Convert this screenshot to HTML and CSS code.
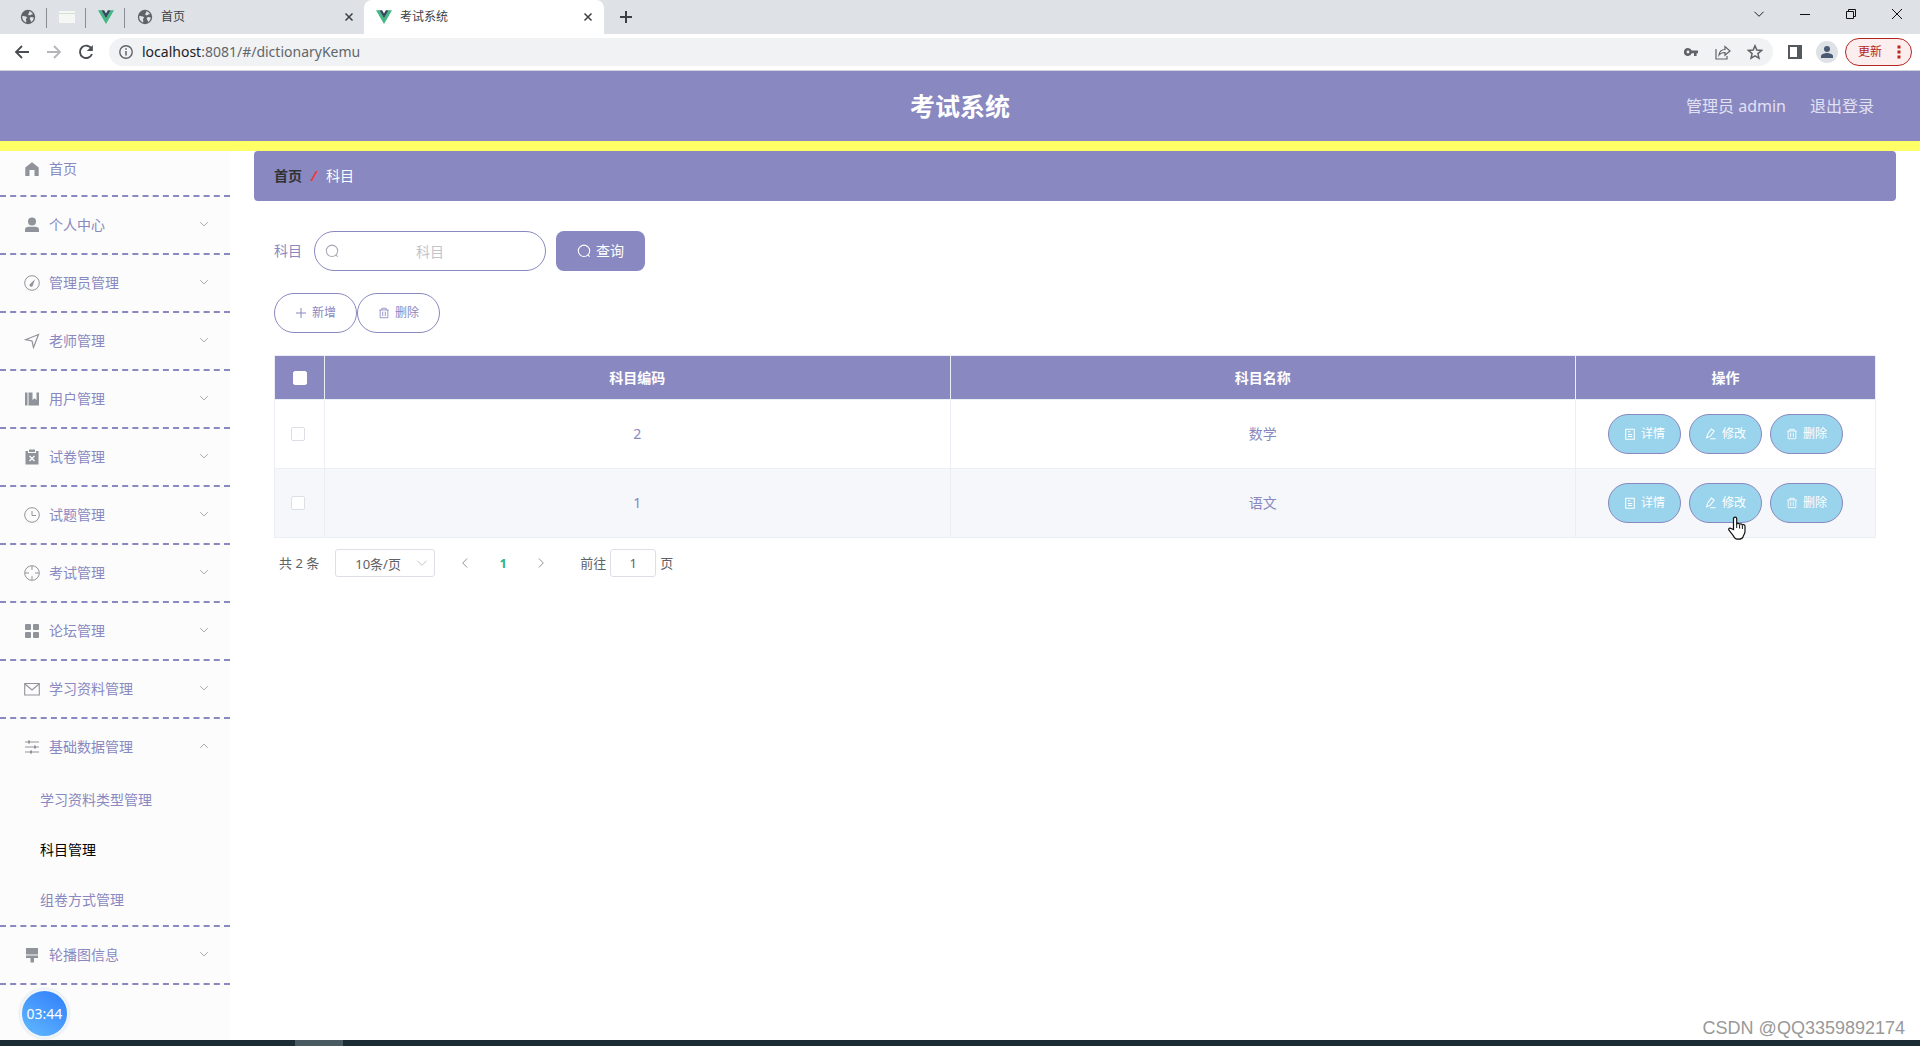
FILE: index.html
```html
<!DOCTYPE html>
<html lang="zh-CN">
<head>
<meta charset="utf-8">
<title>考试系统</title>
<link rel="stylesheet" href="styles.css">
</head>
<body>
<svg class="sprite" aria-hidden="true">
  <symbol id="globe" viewBox="0 0 16 16"><circle cx="8" cy="8" r="7.2" fill="#5f6368"/><path fill="#dee1e6" d="M2.2 7.2c1.600-.4 2.400.3 3.600.3 1.200.2 1.500 1.100.7 1.900-.9.800-.400 1.600-.200 2.500.100.700-.100 1.300-.3 1.600C3.700 12.600 2 10.300 2.200 7.200zM9 2.200c1.700.3 3.300 1.400 4.100 3-.8.100-1.400-.1-2 .5-.7.700-1.800.700-2.500.200-.8-.6-.3-1.400.3-1.900.500-.4.300-1.100.1-1.800zM10.600 8.200c1-.500 2-.200 3.200.2-.1 1.900-1.100 3.600-2.700 4.600-.2-.9-.2-1.400-.8-2-.8-.8-.7-2.200.3-2.800z"/></symbol>
  <symbol id="vue" viewBox="0 0 16 16"><path fill="#41b883" d="M0 1.200h3.300L8 9.200l4.700-8H16L8 15z"/><path fill="#35495e" d="M3.300 1.200h2.800L8 4.600l1.900-3.400h2.800L8 9.300z"/></symbol>
  <symbol id="cross" viewBox="0 0 10 10"><path d="M1.500 1.500l7 7m0-7l-7 7" fill="none" stroke="currentColor" stroke-width="1.500"/></symbol>
  <symbol id="down" viewBox="0 0 12 12"><path d="M1.500 3.800L6 8.300l4.500-4.500" fill="none" stroke="currentColor" stroke-width="1"/></symbol>
  <symbol id="search" viewBox="0 0 16 16"><circle cx="8" cy="7.800" r="6.500" fill="none" stroke="currentColor" stroke-width="1.200"/><path d="M12.300 12.300l2.200 2.200" stroke="currentColor" stroke-width="1.200"/></symbol>
  <symbol id="trash" viewBox="0 0 14 14"><path d="M1.500 3.500h11M4.500 3.500v-2h5v2M2.500 3.500v9h9v-9M5.500 5.500v5M8.500 5.500v5" fill="none" stroke="currentColor"/></symbol>
  <symbol id="detail" viewBox="0 0 14 14"><path d="M2 1.500h10v11.500H2zM4.500 4.500h3M4.500 7.500h5M4.500 10h5" fill="none" stroke="currentColor" stroke-width="1.200"/></symbol>
  <symbol id="edit" viewBox="0 0 14 14"><path d="M1.800 11.500l1.400-4.500L7.500 1.200l3.200 2.300-4.500 6zM6 12.600h6.500" fill="none" stroke="currentColor" stroke-width="1.200"/></symbol>
</svg>

<div class="tabstrip">
  <div class="pinned"><svg class="i16"><use href="#globe"/></svg></div>
  <div class="pinned"><svg class="i16" viewBox="0 0 16 16"><path fill="#f5f7f5" d="M0 2h16v12H0z"/><path stroke="#d3e0d5" d="M0 4.500h16"/></svg></div>
  <div class="pinned"><svg class="i16"><use href="#vue"/></svg></div>
  <div class="tab"><svg class="i16"><use href="#globe"/></svg><span>首页</span><button class="plain" aria-label="关闭标签页"><svg class="i10"><use href="#cross"/></svg></button></div>
  <div class="tab active"><svg class="i16"><use href="#vue"/></svg><span>考试系统</span><button class="plain" aria-label="关闭标签页"><svg class="i10"><use href="#cross"/></svg></button></div>
  <button class="plain newtab" aria-label="新标签页"><svg class="i14" viewBox="0 0 14 14"><path d="M7 1v12M1 7h12" stroke="#3c4043" stroke-width="2"/></svg></button>
  <div class="window-controls">
    <button class="plain" aria-label="搜索标签页"><svg class="i12"><use href="#down"/></svg></button>
    <button class="plain" aria-label="最小化"><svg class="i12" viewBox="0 0 12 12"><path d="M1 6.500h10" stroke="#111"/></svg></button>
    <button class="plain" aria-label="还原"><svg class="i12" viewBox="0 0 12 12"><path d="M1.500 3.500h7v7h-7zM3.500 3.500v-2h7v7h-2" fill="none" stroke="#111"/></svg></button>
    <button class="plain" aria-label="关闭"><svg class="i12" viewBox="0 0 12 12"><path d="M1 1l10 10M11 1L1 11" stroke="#111"/></svg></button>
  </div>
</div>

<div class="toolbar">
  <div class="nav">
    <button class="plain" aria-label="后退"><svg class="i16" viewBox="0 0 16 16"><path d="M15 8H2M8 2L2 8l6 6" fill="none" stroke="#4a4d51" stroke-width="1.800"/></svg></button>
    <button class="plain" aria-label="前进"><svg class="i16" viewBox="0 0 16 16"><path d="M1 8h13M8 2l6 6-6 6" fill="none" stroke="#b4b6b9" stroke-width="1.800"/></svg></button>
    <button class="plain" aria-label="重新加载"><svg class="i16" viewBox="0 0 16 16"><path d="M13.600 4.800A6.200 6.200 0 1 0 14 10" fill="none" stroke="#4a4d51" stroke-width="1.900"/><path d="M14.800 1v6H8.800z" fill="#4a4d51"/></svg></button>
  </div>
  <div class="omnibox">
    <svg class="i14" viewBox="0 0 14 14"><circle cx="7" cy="7" r="6.200" fill="none" stroke="#5f6368" stroke-width="1.400"/><path d="M7 6v4.500M7 3.300v1.500" stroke="#5f6368" stroke-width="1.500"/></svg>
    <span class="url"><b>localhost</b>:8081/#/dictionaryKemu</span>
    <svg class="i16" viewBox="0 0 16 16"><path fill="#5f6368" fill-rule="evenodd" d="M5 4a4 4 0 1 0 3.700 5.300H11V12h2.600V9.300H15V6.600H8.700A4 4 0 0 0 5 4zm0 2.600A1.400 1.400 0 1 1 5 9.400a1.400 1.400 0 0 1 0-2.800z"/></svg>
    <svg class="i16" viewBox="0 0 16 16"><path d="M1 5v10h11v-3M4 11c.5-4 3-5.500 6-5.500V2.500L15 7l-5 4.300V8.500c-2.500 0-4.500.5-6 2.500z" fill="none" stroke="#5f6368" stroke-width="1.200"/></svg>
    <svg class="i16" viewBox="0 0 16 16"><path d="M8 1.800l1.800 4.300 4.700.4-3.600 3.100 1.100 4.600L8 11.800l-4 2.400 1.100-4.600L1.500 6.500l4.700-.4z" fill="none" stroke="#5f6368" stroke-width="1.500"/></svg>
  </div>
  <button class="plain" aria-label="侧边栏"><svg class="i16" viewBox="0 0 16 16"><path d="M2 2h12v12H2z" fill="#fff" stroke="#55585c" stroke-width="2"/><path d="M10 2h4v12h-4z" fill="#55585c"/></svg></button>
  <button class="plain avatar" aria-label="用户"><svg class="i14" viewBox="0 0 14 14"><circle cx="7" cy="4" r="3" fill="#4a5a75"/><path d="M1 13v-2c0-2 4-3 6-3s6 1 6 3v2z" fill="#4a5a75"/></svg></button>
  <button class="update"><span>更新</span><svg viewBox="0 0 4 14" width="4" height="14"><path d="M.5.500h3v3h-3zM.5 5.500h3v3h-3zM.5 10.500h3v3h-3z" fill="#b3261e"/></svg></button>
</div>

<header class="app-header">
  <h1>考试系统</h1>
  <div class="account"><span>管理员 admin</span><a href="#logout">退出登录</a></div>
</header>

<div class="body">
  <nav class="sidebar">
    <a class="item home" href="#home"><svg class="i16" viewBox="0 0 16 16"><path fill="#909399" d="M8 1.200L1.300 6.500V15H5.500V9h5v6h4.200V6.500z"/></svg><span>首页</span></a>
    <a class="item" href="#me"><svg class="i16" viewBox="0 0 16 16"><circle cx="8" cy="4.600" r="4" fill="#909399"/><path fill="#909399" d="M1 15v-2c0-2 1.500-3.200 3.500-3.200h7c2 0 3.500 1.200 3.500 3.200v2z"/></svg><span>个人中心</span><svg class="arrow"><use href="#down"/></svg></a>
    <a class="item" href="#admins"><svg class="i16" viewBox="0 0 16 16"><circle cx="8" cy="8" r="7.300" fill="none" stroke="#909399"/><path fill="#909399" d="M11 4.200L6.300 8.700a1.700 1.700 0 1 0 2.600 1.600z"/></svg><span>管理员管理</span><svg class="arrow"><use href="#down"/></svg></a>
    <a class="item" href="#teachers"><svg class="i16" viewBox="0 0 16 16"><path d="M1.500 6.700L14.500 1.500 9.500 14.500 8 8z" fill="none" stroke="#909399" stroke-width="1.200"/></svg><span>老师管理</span><svg class="arrow"><use href="#down"/></svg></a>
    <a class="item" href="#users"><svg class="i16" viewBox="0 0 16 16"><path fill="#909399" d="M1 1.500h2.500v13H1zM4.500 1.500h4V9l2-1.800L12.500 9V1.500H15v13H4.500z"/></svg><span>用户管理</span><svg class="arrow"><use href="#down"/></svg></a>
    <a class="item" href="#papers"><svg class="i16" viewBox="0 0 16 16"><path fill="#909399" d="M1.500 2H4v2h8V2h2.500v13.500h-13zM5 .500h6V3H5z"/><path d="M5.500 7l5 5m0-5l-5 5" stroke="#fff" stroke-width="1.300"/></svg><span>试卷管理</span><svg class="arrow"><use href="#down"/></svg></a>
    <a class="item" href="#questions"><svg class="i16" viewBox="0 0 16 16"><path d="M8 4v4.500h4" fill="none" stroke="#909399"/><circle cx="8" cy="8" r="7.300" fill="none" stroke="#909399"/></svg><span>试题管理</span><svg class="arrow"><use href="#down"/></svg></a>
    <a class="item" href="#exams"><svg class="i16" viewBox="0 0 16 16"><circle cx="8" cy="8" r="7.300" fill="none" stroke="#909399"/><path d="M8 1v4M8 11v4M1 8h4M11 8h4" stroke="#909399"/></svg><span>考试管理</span><svg class="arrow"><use href="#down"/></svg></a>
    <a class="item" href="#forum"><svg class="i16" viewBox="0 0 16 16" fill="#909399"><rect x="1" y="1" width="6" height="6" rx="1"/><rect x="9" y="1" width="6" height="6" rx="1"/><rect x="1" y="9" width="6" height="6" rx="1"/><rect x="9" y="9" width="6" height="6" rx="1"/></svg><span>论坛管理</span><svg class="arrow"><use href="#down"/></svg></a>
    <a class="item" href="#materials"><svg class="i16" viewBox="0 0 16 16"><path d="M.700 2.500h14.600v11.500H.700zM1 3l7 6 7-6" fill="none" stroke="#909399" stroke-width="1.100"/></svg><span>学习资料管理</span><svg class="arrow"><use href="#down"/></svg></a>
    <div class="group">
      <a class="item" href="#base"><svg class="i16" viewBox="0 0 16 16"><path d="M1 3h14M1 8h14M1 13h14" stroke="#909399" stroke-width="1.200"/><path d="M4 1.500h2v3H4zM10 6.500h2v3h-2zM6 11.500h2v3H6z" fill="#909399"/></svg><span>基础数据管理</span><svg class="arrow open"><use href="#down"/></svg></a>
      <a class="sub" href="#types">学习资料类型管理</a>
      <a class="sub current" href="#subjects">科目管理</a>
      <a class="sub" href="#modes">组卷方式管理</a>
    </div>
    <a class="item" href="#banners"><svg class="i16" viewBox="0 0 16 16"><path fill="#909399" d="M2 1h12v6.500H2zM2 8.500h12V11H10v4.500H6.500V11H2z"/></svg><span>轮播图信息</span><svg class="arrow"><use href="#down"/></svg></a>
  </nav>

  <main>
    <div class="breadcrumb"><a href="#home">首页</a><i>/</i><span>科目</span></div>
    <div class="content">
      <form class="search">
        <label for="subject">科目</label>
        <div class="field"><svg class="i14"><use href="#search"/></svg><input id="subject" type="text" placeholder="科目"></div>
        <button type="button" class="query"><svg class="i14"><use href="#search"/></svg>查询</button>
      </form>
      <div class="actions">
        <button class="pill"><svg class="i12" viewBox="0 0 12 12"><path d="M6 1v10M1 6h10" stroke="currentColor"/></svg>新增</button>
        <button class="pill"><svg class="i12"><use href="#trash"/></svg>删除</button>
      </div>
      <table>
        <colgroup><col class="c-check"><col><col><col class="c-ops"></colgroup>
        <thead><tr><th><input type="checkbox" aria-label="全选"></th><th>科目编码</th><th>科目名称</th><th>操作</th></tr></thead>
        <tbody>
          <tr><td><input type="checkbox" aria-label="选择 2"></td><td>2</td><td>数学</td><td><div class="ops"><button><svg class="i12"><use href="#detail"/></svg>详情</button><button><svg class="i12"><use href="#edit"/></svg>修改</button><button><svg class="i12"><use href="#trash"/></svg>删除</button></div></td></tr>
          <tr class="hover"><td><input type="checkbox" aria-label="选择 1"></td><td>1</td><td>语文</td><td><div class="ops"><button><svg class="i12"><use href="#detail"/></svg>详情</button><button class="pointed"><svg class="i12"><use href="#edit"/></svg>修改<svg class="cursor" viewBox="0 0 20 25"><path d="M6.500 13.500V2.800c0-2.300 3.200-2.300 3.200 0V8.500c0-1.600 2.900-1.500 2.900.3 0-1.400 2.800-1.300 2.800.6 0-1.300 2.600-1.200 2.600.8v5.300c0 2.300-1.700 3.900-1.900 5.200-1 3.200-7.700 3.200-9.100.2C5.500 18 3.500 16.400 2 14.200c-1.100-1.800 1-2.700 2.200-1.600z" fill="#fff" stroke="#111" stroke-width="1.200"/><path d="M9.700 8v4M12.600 9v3.500M15.400 9.500V13" stroke="#111"/></svg></button><button><svg class="i12"><use href="#trash"/></svg>删除</button></div></td></tr>
        </tbody>
      </table>
      <div class="pagination">
        <span>共 2 条</span>
        <div class="size"><select aria-label="每页条数"><option>10条/页</option></select><svg class="i12"><use href="#down"/></svg></div>
        <button class="plain page" aria-label="上一页"><svg class="i12 prev"><use href="#down"/></svg></button>
        <button class="plain page on">1</button>
        <button class="plain page" aria-label="下一页"><svg class="i12 next"><use href="#down"/></svg></button>
        <label class="jump">前往<input type="text" value="1">页</label>
      </div>
    </div>
  </main>
</div>
<div class="taskbar"><span></span></div>
<div class="timer">03:44</div>
<div class="watermark">CSDN @QQ3359892174</div>
</body>
</html>
```
FILE: styles.css
```css
* { box-sizing: border-box; }
body {
  margin: 0;
  min-height: 100vh;
  display: flex;
  flex-direction: column;
  position: relative;
  background: #fff;
  color: #8988c0;
  font: 14px/20px "Noto Sans", "Noto Sans CJK SC", sans-serif;
}
a { color: inherit; text-decoration: none; }
button, input, select { font: inherit; color: inherit; margin: 0; }
svg { flex: none; display: block; }
.sprite { position: absolute; width: 0; height: 0; }
.i10 { width: 10px; height: 10px; }
.i12 { width: 12px; height: 12px; }
.i14 { width: 14px; height: 14px; }
.i16 { width: 16px; height: 16px; }
.plain { border: 0; padding: 0; background: none; display: flex; align-items: center; justify-content: center; }

/* Browser window */
.tabstrip { display: flex; height: 34px; padding-left: 8px; background: #dee1e6; color: #3c4043; font-size: 12px; }
.pinned { width: 39px; display: flex; align-items: center; justify-content: center; position: relative; }
.pinned::after { content: ""; position: absolute; right: 0; top: 8px; width: 1px; height: 20px; background: #8a8d91; }
.tab { width: 239px; display: flex; align-items: center; gap: 8px; padding: 0 10px 0 12px; }
.tab span { flex: 1; }
.tab.active { width: 240px; padding-right: 11px; background: #fff; border-radius: 8px 8px 0 0; }
.newtab { width: 43px; }
.window-controls { margin-left: auto; display: flex; padding-bottom: 6px; color: #222; }
.window-controls button { width: 46px; }
.toolbar { display: flex; align-items: center; height: 37px; padding: 0 8px 1px 14px; border-bottom: 1px solid #d0d2dc; }
.nav { display: flex; gap: 16px; width: 95px; }
.omnibox { flex: 1; display: flex; align-items: center; gap: 16px; height: 28px; padding: 0 10px; border-radius: 14px; background: #f0f2f4; }
.url { flex: 1; margin-left: -7px; font-size: 14px; color: #63666a; }
.url b { font-weight: 400; color: #202124; }
.omnibox + .plain { margin: 0 13px 0 14px; }
.avatar { width: 22px; height: 22px; border-radius: 50%; background: #dee1e6; }
.update { display: flex; align-items: center; justify-content: space-between; width: 67px; height: 28px; margin-left: 7px; padding: 0 10px 0 12px; border: 1px solid #b3261e; border-radius: 14px; background: #fceeee; color: #b3261e; font-size: 12px; }

/* Application header */
.app-header { display: grid; grid-template-columns: 1fr auto 1fr; align-items: center; height: 80px; padding: 0 46px; background: #8988c0; border-bottom: 10px solid #ffff66; color: #fff; }
.app-header h1 { grid-column: 2; margin: 0; font-size: 25px; line-height: 36px; }
.account { justify-self: end; display: flex; gap: 24px; font-size: 16px; color: #e1e1f3; }

/* Side menu */
.body { flex: 1; display: flex; }
.sidebar { width: 230px; flex: none; background: #fcfcfc; }
.item { display: flex; align-items: center; gap: 9px; height: 58px; padding: 0 21px 0 24px; border-bottom: 2px dashed #8988c0; }
.item.home { height: 46px; padding-bottom: 8px; }
.arrow { width: 10px; height: 10px; margin: 0 0 3px auto; color: #909399; }
.arrow.open { transform: rotate(180deg); }
.group { border-bottom: 2px dashed #8988c0; }
.group .item { height: 56px; border: 0; }
.sub { display: block; padding: 0 40px; line-height: 50px; }
.sub.current { color: #000; }

/* Main area */
main { flex: 1; padding: 0 24px; }
.breadcrumb { display: flex; gap: 9px; padding: 15px 20px; border-radius: 4px; background: #8988c0; color: #fff; }
.breadcrumb a { color: #303133; font-weight: 700; }
.breadcrumb i { color: #f03a3a; font-weight: 700; }
.content { padding: 30px 20px; }
.search { display: flex; align-items: center; }
.field { width: 232px; margin: 0 10px 0 12px; display: flex; align-items: center; border: 1px solid #8988c0; border-radius: 20px; padding: 0 10px; color: #a6a9b4; }
.field input { flex: 1; min-width: 0; height: 38px; border: 0; padding: 0 14px 0 0; background: none; outline: 0; text-align: center; }
.field input::placeholder { color: #c0c4cc; }
.query { display: flex; align-items: center; justify-content: center; gap: 5px; width: 89px; height: 40px; border: 0; border-radius: 8px; background: #8988c0; color: #fff; }
.actions { display: flex; margin: 22px 0; }
.pill { display: flex; align-items: center; justify-content: center; gap: 5px; width: 83px; height: 40px; border: 1px solid #8988c0; border-radius: 20px; background: #fff; font-size: 12px; }

table { width: 100%; table-layout: fixed; border-spacing: 0; border-left: 1px solid #ebeef5; border-top: 1px solid #ebeef5; }
.c-check { width: 50px; }
.c-ops { width: 300px; }
th, td { padding: 0; text-align: center; border-right: 1px solid #ebeef5; border-bottom: 1px solid #ebeef5; }
th { height: 44px; background: #8988c0; color: #fff; }
td { height: 69px; }
.hover td { background: #f5f7fa; }
input[type="checkbox"] { appearance: none; display: block; width: 14px; height: 14px; margin: 0 auto; border: 1px solid #dcdfe6; border-radius: 2px; background: #fff; }
th input[type="checkbox"] { border-color: #fff; }
td:first-child { padding-right: 3px; }
.ops { display: flex; justify-content: center; gap: 8px; }
.ops button { position: relative; display: flex; align-items: center; justify-content: center; gap: 5px; width: 73px; height: 40px; padding: 0; border: 1px solid #8988c0; border-radius: 20px; background: #9ad3ec; color: #fff; font-size: 12px; }
.cursor { position: absolute; left: 37px; top: 32px; width: 20px; height: 25px; }

.pagination { display: flex; align-items: center; margin: 11px 5px; font-size: 13px; line-height: 28px; color: #606266; }
.size { position: relative; width: 100px; margin: 0 11px 0 16px; }
.size select { appearance: none; display: block; width: 100%; height: 28px; padding: 0 19px; border: 1px solid #dcdfe6; border-radius: 3px; background: #fff; outline: 0; }
.size svg { position: absolute; right: 7px; top: 8px; color: #c0c4cc; }
.page { width: 30px; height: 28px; margin: 0 4px; color: #909399; }
.page.on { color: #2ab58d; font-weight: 700; }
.prev { transform: rotate(90deg); }
.next { transform: rotate(-90deg); }
.jump { display: flex; gap: 4px; margin-left: 20px; }
.jump input { width: 46px; height: 28px; padding: 0; border: 1px solid #dcdfe6; border-radius: 3px; text-align: center; }

.taskbar { height: 6px; padding: 0 4px 0 295px; background: #1b2c34; }
.taskbar span { display: block; width: 48px; height: 6px; background: #4a5a61; }
.timer { position: absolute; left: 20px; bottom: 8px; width: 49px; height: 49px; border: 2px solid #f0f5fa; border-radius: 50%; background: linear-gradient(35deg, #62baff, #2f7dfb); box-shadow: 0 0 3px #c8d4e2; color: #fff; text-align: center; line-height: 45px; }
.watermark { position: absolute; right: 15px; bottom: 6px; font: 18px/24px "Liberation Sans", sans-serif; color: #999; }
```
